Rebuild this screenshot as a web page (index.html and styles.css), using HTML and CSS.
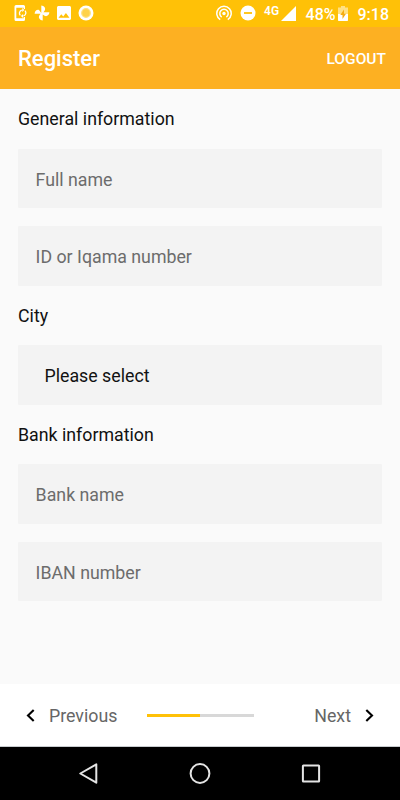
FILE: index.html
```html
<!DOCTYPE html>
<html lang="en">
  <head>
    <meta charset="UTF-8" />
    <meta name="viewport" content="width=device-width, initial-scale=1.0" />
    <title>Register</title>
    <link rel="stylesheet" href="styles.css">
  </head>
  <body>
    <div class="status-bar">
      <div class="status-left">
        <svg class="icon-phone" width="15" height="18" viewBox="0 0 15 18">
          <path d="M3 1h7.500A1.500 1.500 0 0 1 12 2.500V5h-1.300V3.800H3.300v10.400h7.400V13H12v2.500a1.500 1.500 0 0 1-1.500 1.500H3a1.500 1.500 0 0 1-1.500-1.500v-13A1.500 1.500 0 0 1 3 1z" fill="#fff" />
          <path d="M7.300 11.400a3.200 3.200 0 0 1 1.500-5.300M12 6.600a3.200 3.200 0 0 1-1.500 5.300" fill="none" stroke="#fff" stroke-width="1.300" />
          <path d="M9.200 4v4l2.200-2zM10.100 9.900v4l-2.200-2z" fill="#fff" />
        </svg>
        <svg class="icon-fan" width="16" height="16" viewBox="0 0 16 16">
          <path d="M7.300 8V.6c3 .3 4.300 2.300 3.700 4.400L9.500 7.300H15.400c-.3 3-2.300 4.300-4.400 3.700L8.700 9.500v5.900c-3-.3-4.300-2.300-3.700-4.400L6.500 8.700H.6C.9 5.700 2.900 4.400 5 5z" fill="#fff" />
        </svg>
        <svg class="icon-image" width="14" height="14" viewBox="3 3 18 18">
          <path d="M21 19V5c0-1.100-.9-2-2-2H5c-1.100 0-2 .9-2 2v14c0 1.100.9 2 2 2h14c1.100 0 2-.9 2-2zM8.500 13.500l2.500 3.010L14.500 12l4.500 6H5l3.500-4.500z" fill="#fff" />
        </svg>
        <svg class="icon-record" width="16" height="16" viewBox="0 0 16 16">
          <circle cx="8" cy="8" r="7.500" fill="#fff" />
          <circle cx="8" cy="8" r="4.300" fill="#ffd248" stroke="#ffe17f" stroke-width="1.200" />
        </svg>
      </div>
      <div class="status-right">
        <svg class="icon-hotspot" width="16" height="16" viewBox="0 0 16 16">
          <g fill="none" stroke="#fff" stroke-width="1.500">
            <path d="M4.200 14.600a7.200 7.200 0 1 1 7.600 0" />
            <path d="M5.700 12a4.200 4.200 0 1 1 4.600 0" />
          </g>
          <circle cx="8" cy="8.500" r="1.700" fill="#fff" />
        </svg>
        <svg class="icon-dnd" width="16" height="16" viewBox="0 0 16 16">
          <circle cx="8" cy="8" r="7.500" fill="#fff" />
          <path d="M4 8h8" stroke="#ffc107" stroke-width="1.800" />
        </svg>
        <span class="network">4G</span>
        <svg class="icon-signal" width="15" height="15" viewBox="0 0 15 15">
          <path d="M15 0v15H0z" fill="#fff" />
        </svg>
        <span class="battery-level">48%</span>
        <svg class="icon-battery" width="10" height="15" viewBox="0 0 10 15">
          <path d="M3 0h4v1.500h3V8H0V1.500h3z" fill="#ffe083" />
          <path d="M0 8h10v6.200a.8.800 0 0 1-.8.800H.8a.8.800 0 0 1-.8-.8z" fill="#fff" />
          <path d="M6 3.500 2.300 9h2.200v4L8 7.700H6z" fill="#f5ac12" />
        </svg>
        <span class="clock">9:18</span>
      </div>
    </div>

    <header>
      <h1>Register</h1>
      <button type="button" class="logout">LOGOUT</button>
    </header>

    <main>
      <form id="register-form">
        <h2>General information</h2>
        <input type="text" placeholder="Full name" />
        <input type="text" placeholder="ID or Iqama number" />

        <h2>City</h2>
        <div class="select">Please select</div>

        <h2>Bank information</h2>
        <input type="text" placeholder="Bank name" />
        <input type="text" placeholder="IBAN number" />
      </form>
    </main>

    <footer>
      <button type="button" class="step previous">
        <svg width="9" height="14" viewBox="0 0 9 14">
          <path d="M7.700 1 2 6.500 7.700 12" fill="none" stroke="#000" stroke-width="2.100" />
        </svg>
        Previous
      </button>
      <div class="progress"><div class="progress-value" style="width: 50%"></div></div>
      <button type="button" class="step next">
        Next
        <svg width="9" height="14" viewBox="0 0 9 14">
          <path d="M1.300 1 7 6.500 1.300 12" fill="none" stroke="#000" stroke-width="2.100" />
        </svg>
      </button>
    </footer>

    <nav class="system-nav">
      <svg width="22" height="22" viewBox="0 0 22 22">
        <path d="M18.300 1.300v18.400L2.300 10.500z" fill="none" stroke="#e4e4e4" stroke-width="2" stroke-linejoin="round" />
      </svg>
      <svg width="22" height="22" viewBox="0 0 22 22">
        <circle cx="11" cy="10.500" r="9.400" fill="none" stroke="#e4e4e4" stroke-width="2" />
      </svg>
      <svg width="22" height="22" viewBox="0 0 22 22">
        <rect x="2.900" y="2.400" width="16.200" height="16.200" rx=".5" fill="none" stroke="#e4e4e4" stroke-width="2" />
      </svg>
    </nav>
  </body>
</html>
```
FILE: styles.css
```css
* {
  box-sizing: border-box;
}

body {
  font-family: Roboto, "Liberation Sans", sans-serif;
  font-size: 17.78px;
  margin: 0;
  height: 800px;
  display: flex;
  flex-direction: column;
  background-color: #fafafa;
  color: #111;
}

svg {
  display: block;
  flex: none;
}

button {
  font-family: inherit;
  background: none;
  border: none;
  padding: 0;
  cursor: pointer;
}

/* Status bar */
.status-bar {
  height: 27px;
  display: flex;
  justify-content: space-between;
  padding: 0 11px 0 13px;
  background-color: #ffc107;
  color: #fff;
}

.status-left,
.status-right {
  display: flex;
  align-items: center;
}

.icon-phone {
  margin-top: -1px;
}

.icon-fan {
  margin-left: 6px;
  margin-top: -1px;
}

.icon-image {
  margin-left: 7px;
  margin-top: -1px;
}

.icon-record {
  margin-left: 7px;
  margin-top: -1px;
}

.icon-hotspot,
.icon-dnd {
  margin-top: -1px;
}

.icon-dnd {
  margin-left: 8px;
}

.network {
  margin: 0 1px 6px 8px;
  font-size: 12px;
  font-weight: 600;
  letter-spacing: 0.3px;
}

.icon-signal {
  margin-top: -1px;
}

.battery-level {
  margin: 1px 2px 0 10px;
  font-size: 16px;
  font-weight: 500;
}

.clock {
  margin: 1px 0 0 10px;
  font-size: 16px;
  font-weight: 500;
}

/* App bar */
header {
  height: 62px;
  display: flex;
  align-items: center;
  justify-content: space-between;
  padding: 2px 14px 0 18px;
  background-color: #fdb022;
  color: #fff;
}

h1 {
  margin: 0 0 2px;
  font-size: 22px;
  font-weight: 500;
}

.logout {
  color: #fff;
  font-size: 15.56px;
  font-weight: 500;
}

/* Form */
main {
  flex: 1;
  padding: 0 18px;
}

form {
  display: flex;
  flex-direction: column;
}

h2 {
  margin: 0;
  height: 59.6px;
  line-height: 61.8px;
  font-size: 17.78px;
  font-weight: 400;
}

input,
.select {
  width: 100%;
  height: 59.6px;
  padding: 2.4px 17.6px 0;
  border: none;
  border-radius: 1px;
  background-color: #f3f3f3;
  color: #111;
  font-family: inherit;
  font-size: 17.78px;
}

input + input {
  margin-top: 17.8px;
}

input::placeholder {
  color: #6c6c6c;
  opacity: 1;
}

.select {
  padding: 1px 26.5px 0;
  line-height: 60px;
}

/* Step navigation */
footer {
  height: 63px;
  display: flex;
  align-items: center;
  justify-content: space-between;
  padding: 0 26px;
  background-color: #fff;
  border-bottom: 1px solid #c8cccf;
}

.step {
  display: flex;
  align-items: center;
  gap: 14px;
  width: 100px;
  padding-top: 2px;
  color: #666;
  font-size: 17.78px;
}

.next {
  justify-content: flex-end;
}

.progress {
  width: 107px;
  height: 3px;
  background-color: #d8d8d8;
}

.progress-value {
  height: 100%;
  background-color: #ffc107;
}

/* Android buttons */
.system-nav {
  height: 53px;
  display: flex;
  align-items: center;
  justify-content: center;
  gap: 89px;
  background-color: #000;
}
```
